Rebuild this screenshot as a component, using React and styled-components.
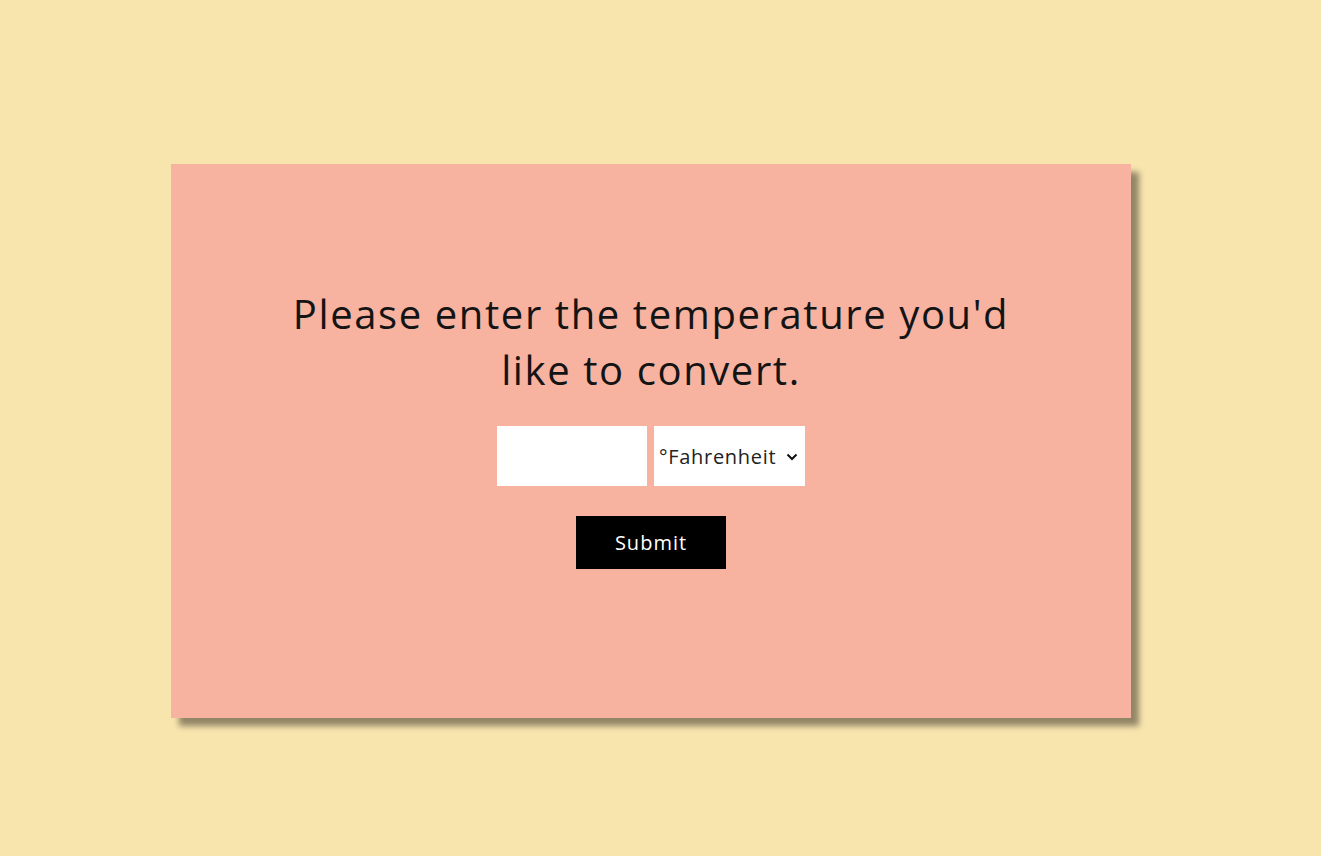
import React from 'react';
import styled, { createGlobalStyle } from 'styled-components';

const GlobalStyle = createGlobalStyle`
  html, body {
    margin: 0;
    padding: 0;
  }
  body {
    background: #f8e5ae;
    font-family: 'Open Sans', 'Noto Sans', sans-serif;
  }
`;

const Page = styled.main`
  min-height: 100vh;
  display: flex;
  justify-content: center;
  padding: 164px 19px 0 0;
  box-sizing: border-box;
`;

const Card = styled.section`
  width: 960px;
  height: 554px;
  background: #f8b2a0;
  box-shadow: 8px 8px 6px rgba(0, 0, 0, 0.42);
  display: flex;
  flex-direction: column;
  align-items: center;
  padding-top: 122px;
  box-sizing: border-box;
`;

const Heading = styled.h1`
  width: 750px;
  margin: 0;
  font-size: 40px;
  line-height: 56px;
  font-weight: 400;
  letter-spacing: 1.6px;
  text-align: center;
  color: #141414;
`;

const Row = styled.form`
  display: flex;
  flex-direction: column;
  align-items: center;
  margin-top: 28px;
`;

const Fields = styled.div`
  display: flex;
  gap: 7px;
`;

const NumberInput = styled.input`
  width: 150px;
  height: 60px;
  border: none;
  background: #fff;
  box-sizing: border-box;
  font-family: inherit;
  font-size: 20px;
  padding: 0 8px;
  outline: none;
`;

const SelectWrap = styled.div`
  position: relative;
  width: 151px;
  height: 60px;
`;

const UnitSelect = styled.select`
  appearance: none;
  width: 100%;
  height: 100%;
  border: none;
  border-radius: 0;
  background: #fff;
  box-sizing: border-box;
  font-family: inherit;
  font-size: 20px;
  letter-spacing: 0.7px;
  color: #222;
  padding: 0 0 0 5px;
  outline: none;
`;

const Chevron = styled.svg`
  position: absolute;
  right: 7px;
  top: 50%;
  width: 12px;
  height: 8px;
  margin-top: -3px;
  pointer-events: none;
`;

const SubmitButton = styled.button`
  margin-top: 30px;
  width: 150px;
  height: 53px;
  border: none;
  background: #000;
  color: #fff;
  font-family: inherit;
  font-size: 20px;
  font-weight: 400;
  letter-spacing: 1px;
  cursor: pointer;
`;

export default function App() {
  return (
    <>
      <GlobalStyle />
      <Page>
        <Card>
          <Heading>Please enter the temperature you'd like to convert.</Heading>
          <Row onSubmit={(e) => e.preventDefault()}>
            <Fields>
              <NumberInput type="number" />
              <SelectWrap>
                <UnitSelect defaultValue="f">
                  <option value="f">°Fahrenheit</option>
                  <option value="c">°Celsius</option>
                  <option value="k">°Kelvin</option>
                </UnitSelect>
                <Chevron viewBox="0 0 12 8">
                  <path d="M1.5 1.5 L6 6 L10.5 1.5" fill="none" stroke="#111" strokeWidth="2" />
                </Chevron>
              </SelectWrap>
            </Fields>
            <SubmitButton type="submit">Submit</SubmitButton>
          </Row>
        </Card>
      </Page>
    </>
  );
}
